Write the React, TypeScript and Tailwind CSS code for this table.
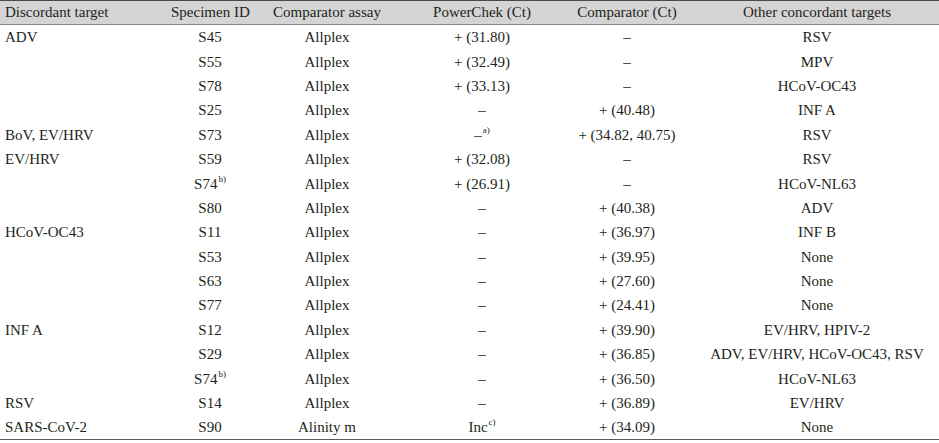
import React from "react";

type Row = {
  target?: string;
  id: string;
  idSup?: string;
  assay: string;
  pc: string;
  pcSup?: string;
  comp: string;
  other: string;
};

const rows: Row[] = [
  { target: "ADV", id: "S45", assay: "Allplex", pc: "+ (31.80)", comp: "–", other: "RSV" },
  { id: "S55", assay: "Allplex", pc: "+ (32.49)", comp: "–", other: "MPV" },
  { id: "S78", assay: "Allplex", pc: "+ (33.13)", comp: "–", other: "HCoV-OC43" },
  { id: "S25", assay: "Allplex", pc: "–", comp: "+ (40.48)", other: "INF A" },
  { target: "BoV, EV/HRV", id: "S73", assay: "Allplex", pc: "–", pcSup: "a)", comp: "+ (34.82, 40.75)", other: "RSV" },
  { target: "EV/HRV", id: "S59", assay: "Allplex", pc: "+ (32.08)", comp: "–", other: "RSV" },
  { id: "S74", idSup: "b)", assay: "Allplex", pc: "+ (26.91)", comp: "–", other: "HCoV-NL63" },
  { id: "S80", assay: "Allplex", pc: "–", comp: "+ (40.38)", other: "ADV" },
  { target: "HCoV-OC43", id: "S11", assay: "Allplex", pc: "–", comp: "+ (36.97)", other: "INF B" },
  { id: "S53", assay: "Allplex", pc: "–", comp: "+ (39.95)", other: "None" },
  { id: "S63", assay: "Allplex", pc: "–", comp: "+ (27.60)", other: "None" },
  { id: "S77", assay: "Allplex", pc: "–", comp: "+ (24.41)", other: "None" },
  { target: "INF A", id: "S12", assay: "Allplex", pc: "–", comp: "+ (39.90)", other: "EV/HRV, HPIV-2" },
  { id: "S29", assay: "Allplex", pc: "–", comp: "+ (36.85)", other: "ADV, EV/HRV, HCoV-OC43, RSV" },
  { id: "S74", idSup: "b)", assay: "Allplex", pc: "–", comp: "+ (36.50)", other: "HCoV-NL63" },
  { target: "RSV", id: "S14", assay: "Allplex", pc: "–", comp: "+ (36.89)", other: "EV/HRV" },
  { target: "SARS-CoV-2", id: "S90", assay: "Alinity m", pc: "Inc", pcSup: "c)", comp: "+ (34.09)", other: "None" },
];

const Sup = ({ t }: { t: string }) => (
  <sup className="text-[9px] relative -top-[7px] ml-[1px]">{t}</sup>
);

export default function App() {
  return (
    <div
      className="w-[939px] h-[443px] bg-white text-[#231f20] text-[15px] leading-none"
      style={{ fontFamily: '"Liberation Serif", "Times New Roman", serif' }}
    >
      <table className="w-[939px] table-fixed border-collapse">
        <colgroup>
          <col className="w-[171px]" />
          <col className="w-[78px]" />
          <col className="w-[156px]" />
          <col className="w-[154px]" />
          <col className="w-[136px]" />
          <col className="w-[244px]" />
        </colgroup>
        <thead>
          <tr className="h-[24px] bg-[#d4d4d4] border-t-[1.5px] border-t-[#4a4a4a] border-b border-b-[#8a8a8a]">
            <th className="font-normal text-left pl-[5px] whitespace-nowrap">Discordant target</th>
            <th className="font-normal text-center whitespace-nowrap">Specimen ID</th>
            <th className="font-normal text-center whitespace-nowrap">Comparator assay</th>
            <th className="font-normal text-center whitespace-nowrap">PowerChek (Ct)</th>
            <th className="font-normal text-center whitespace-nowrap">Comparator (Ct)</th>
            <th className="font-normal text-center whitespace-nowrap">Other concordant targets</th>
          </tr>
        </thead>
        <tbody>
          {rows.map((r, i) => (
            <tr
              key={i}
              className={
                "h-[24.4px] " +
                (i === rows.length - 1 ? "border-b-[1.5px] border-b-[#5a5a5a]" : "")
              }
            >
              <td className="text-left pl-[5px] pt-[2px] whitespace-nowrap">{r.target ?? ""}</td>
              <td className="text-center pt-[2px] whitespace-nowrap">
                {r.id}
                {r.idSup && <Sup t={r.idSup} />}
              </td>
              <td className="text-center pt-[2px] whitespace-nowrap">{r.assay}</td>
              <td className="text-center pt-[2px] whitespace-nowrap">
                {r.pc}
                {r.pcSup && <Sup t={r.pcSup} />}
              </td>
              <td className="text-center pt-[2px] whitespace-nowrap">{r.comp}</td>
              <td className="text-center pt-[2px] whitespace-nowrap">{r.other}</td>
            </tr>
          ))}
        </tbody>
      </table>
    </div>
  );
}
